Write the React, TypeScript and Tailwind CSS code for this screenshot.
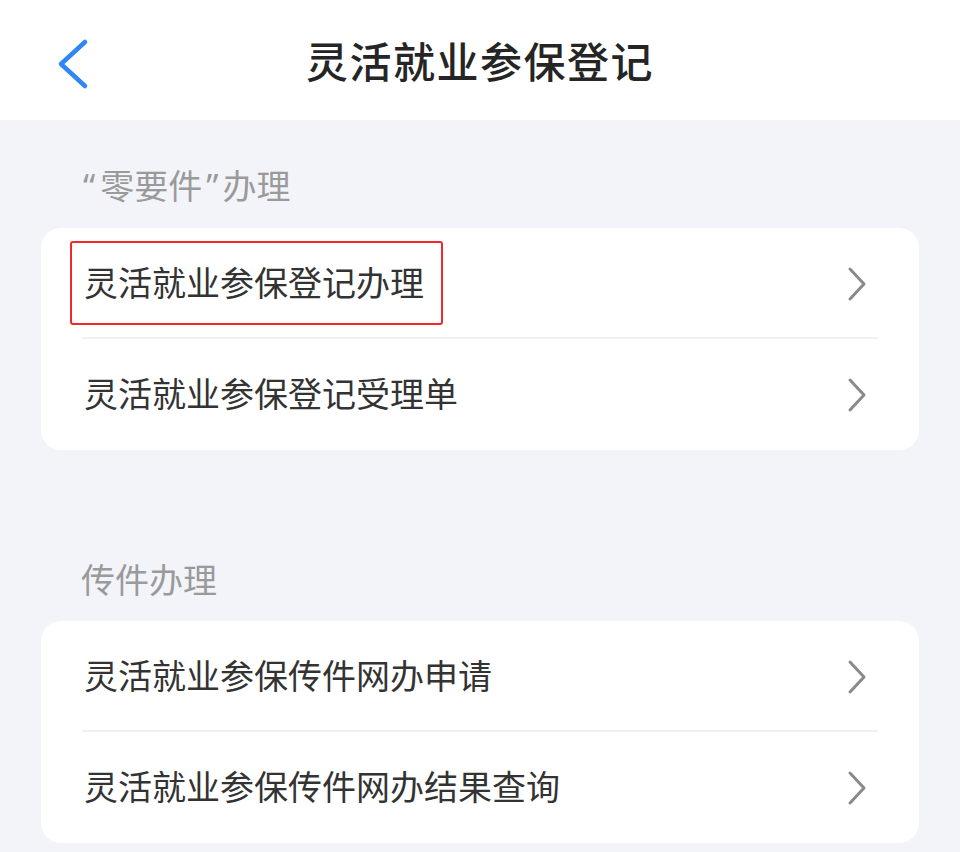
import React from 'react';

const font = { fontFamily: '"Noto Sans CJK SC", "Noto Sans", sans-serif' };

function Chevron() {
  return (
    <svg width="22" height="36" viewBox="0 0 22 36" fill="none" className="shrink-0">
      <polyline points="4,3 18,18 4,33" stroke="#8a8a8a" strokeWidth="3" strokeLinecap="round" strokeLinejoin="round" />
    </svg>
  );
}

function Row({ text, divider, marked }: { text: string; divider?: boolean; marked?: boolean }) {
  return (
    <div className="relative flex h-[111px] items-center justify-between pl-[43px] pr-[51px]">
      <span className="-mt-[3px] text-[34px] leading-none text-[#333333]">{text}</span>
      <Chevron />
      {marked && (
        <div className="absolute left-[29px] top-[13px] h-[84px] w-[373px] rounded-[3px] border-2 border-[#f0282d]" />
      )}
      {divider && <div className="absolute bottom-0 left-[41px] right-[41px] h-[2px] bg-[#f0f0f2]" />}
    </div>
  );
}

function Section({ label, top, items, marked }: { label: React.ReactNode; top: string; items: string[]; marked?: boolean }) {
  return (
    <>
      <div className={`${top} pb-[21px] pl-[81px] text-[34px] leading-[42px] text-[#9a9a9a]`}>{label}</div>
      <div className="mx-[41px] rounded-[20px] bg-white">
        {items.map((t, i) => (
          <Row key={t} text={t} divider={i < items.length - 1} marked={marked && i === 0} />
        ))}
      </div>
    </>
  );
}

const latin = { fontFamily: '"Noto Sans", "Liberation Sans", sans-serif' };

export default function App() {
  return (
    <div className="h-[852px] w-[960px] overflow-hidden bg-[#f3f4f9]" style={font}>
      <div className="relative flex h-[120px] items-center justify-center bg-white">
        <svg className="absolute left-[54px] top-[38px]" width="38" height="52" viewBox="0 0 38 52" fill="none">
          <polyline points="31,4 7,26 31,48" stroke="#2f86f6" strokeWidth="4.5" strokeLinecap="round" strokeLinejoin="round" />
        </svg>
        <h1 className="text-[42px] font-medium leading-none tracking-[1.5px] text-[#252525]">灵活就业参保登记</h1>
      </div>
      <Section
        label={
          <>
            <span className="pl-[2px] pr-[5px]" style={latin}>“</span>零要件<span className="pl-[4px] pr-[4px]" style={latin}>”</span>办理
          </>
        }
        top="pt-[44px]"
        items={['灵活就业参保登记办理', '灵活就业参保登记受理单']}
        marked
      />
      <Section
        label="传件办理"
        top="pt-[108px]"
        items={['灵活就业参保传件网办申请', '灵活就业参保传件网办结果查询']}
      />
    </div>
  );
}
